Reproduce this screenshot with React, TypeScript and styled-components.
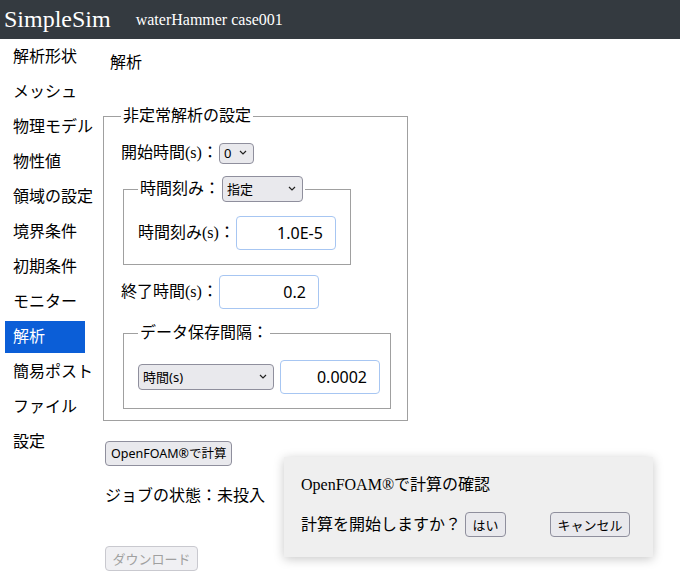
import React from 'react';
import styled, { createGlobalStyle } from 'styled-components';

const GlobalStyle = createGlobalStyle`
  body {
    margin: 0;
    background: #fff;
    font-family: "Liberation Serif", "Noto Sans CJK JP", serif;
    font-size: 16px;
    line-height: 24px;
    color: #000;
  }
`;

const uiFont = `"Noto Sans", "Noto Sans CJK JP", sans-serif`;

const Header = styled.header`
  height: 39px;
  background: #343a40;
  color: #fff;
  display: flex;
  align-items: center;
  padding-left: 4px;
`;

const Brand = styled.div`
  font-size: 24px;
  line-height: 30px;
  margin-top: -2px;
`;

const CaseName = styled.div`
  font-size: 16px;
  margin-left: 25px;
`;

const Body = styled.div`
  display: flex;
  position: relative;
  min-height: 545px;
`;

const Sidebar = styled.nav`
  width: 96px;
  flex-shrink: 0;
  padding-top: 2px;
  display: flex;
  flex-direction: column;
  align-items: flex-start;
  gap: 3px;
`;

const NavItem = styled.div<{ $active?: boolean }>`
  margin-left: 5px;
  min-width: 80px;
  height: 32px;
  line-height: 32px;
  padding-left: 8px;
  box-sizing: border-box;
  white-space: nowrap;
  background: ${(p) => (p.$active ? '#0b5ed7' : 'transparent')};
  color: ${(p) => (p.$active ? '#fff' : '#000')};
`;

const Main = styled.main`
  padding-left: 5px;
  padding-top: 12px;
`;

const Title = styled.div`
  padding-left: 9px;
`;

const Fieldset = styled.fieldset<{ $w: number }>`
  width: ${(p) => p.$w}px;
  box-sizing: border-box;
  margin: 0 2px;
  padding: 0 0 11px 17px;
  border: 1px solid #a0a0a0;
  display: flex;
  flex-direction: column;
  align-items: flex-start;
`;

const Outer = styled(Fieldset)`
  margin-top: 29px;
`;

const Inner = styled(Fieldset)<{ $mt: number }>`
  padding: 0 0 14px 14px;
  margin-top: ${(p) => p.$mt}px;
`;

const Legend = styled.legend`
  padding: 0 2px;
  display: flex;
  align-items: center;
  gap: 2px;
`;

const Row = styled.div<{ $mt: number }>`
  display: flex;
  align-items: center;
  gap: 1px;
  margin-top: ${(p) => p.$mt}px;
`;

const SelectWrap = styled.span`
  position: relative;
  display: inline-flex;
`;

const Select = styled.select<{ $w: number; $h: number }>`
  appearance: none;
  width: ${(p) => p.$w}px;
  height: ${(p) => p.$h}px;
  box-sizing: border-box;
  background: #e9e9ed;
  border: 1px solid #8f8f9d;
  border-radius: 4px;
  font-family: ${uiFont};
  font-size: 13px;
  color: #000;
  padding: 0 0 0 4px;
  margin: 0;
`;

const Chevron = styled.svg`
  position: absolute;
  right: 7px;
  top: 50%;
  margin-top: -3px;
  pointer-events: none;
`;

const NumInput = styled.input`
  width: 100px;
  height: 34px;
  box-sizing: border-box;
  border: 1px solid #a7c6f2;
  border-radius: 4px;
  text-align: right;
  padding: 0 12px 0 4px;
  font-family: ${uiFont};
  font-size: 16px;
  color: #000;
  margin: 0;
`;

const Gap = styled.span<{ $w: number }>`
  display: inline-block;
  width: ${(p) => p.$w}px;
`;

const Button = styled.button<{ $mt?: number; $ml?: number; $compact?: boolean }>`
  font-family: ${uiFont};
  font-size: ${(p) => (p.$compact ? '12.5px' : '13px')};
  line-height: 18px;
  height: 25px;
  padding: ${(p) => (p.$compact ? '0 5px' : '0 6.5px')};
  margin-top: ${(p) => p.$mt ?? 0}px;
  margin-left: ${(p) => p.$ml ?? 0}px;
  background: #e9e9ed;
  border: 1px solid #8f8f9d;
  border-radius: 4px;
  color: #000;

  &:disabled {
    color: #a0a0a0;
    border-color: #c9c9cf;
    background: #f0f0f3;
  }
`;

const Status = styled.div`
  margin-top: 18px;
`;

const Actions = styled.div`
  padding-left: 4px;
  padding-top: 20px;
  display: flex;
  flex-direction: column;
  align-items: flex-start;
`;

const Dialog = styled.div`
  position: absolute;
  left: 284px;
  top: 418px;
  width: 369px;
  height: 100px;
  box-sizing: border-box;
  background: #efefef;
  box-shadow: 0 2px 10px rgba(0, 0, 0, 0.22);
  padding: 16px 0 0 17px;
`;

const DialogRow = styled.div`
  display: flex;
  align-items: center;
  margin-top: 15px;
`;

function Dropdown({ value, w, h }: { value: string; w: number; h: number }) {
  return (
    <SelectWrap>
      <Select $w={w} $h={h} defaultValue={value}>
        <option>{value}</option>
      </Select>
      <Chevron width="8" height="5" viewBox="0 0 8 5">
        <path d="M1 1 L4 4 L7 1" fill="none" stroke="#222" strokeWidth="1.2" />
      </Chevron>
    </SelectWrap>
  );
}

const navItems = ['解析形状', 'メッシュ', '物理モデル', '物性値', '領域の設定', '境界条件', '初期条件', 'モニター', '解析', '簡易ポスト', 'ファイル', '設定'];

export default function App() {
  return (
    <>
      <GlobalStyle />
      <Header>
        <Brand>SimpleSim</Brand>
        <CaseName>waterHammer case001</CaseName>
      </Header>
      <Body>
        <Sidebar>
          {navItems.map((n) => (
            <NavItem key={n} $active={n === '解析'}>{n}</NavItem>
          ))}
        </Sidebar>
        <Main>
          <Title>解析</Title>
          <Outer $w={305}>
            <Legend>非定常解析の設定</Legend>
            <Row $mt={13}>
              開始時間(s)：<Dropdown value="0" w={35} h={21} />
            </Row>
            <Inner $w={228} $mt={11}>
              <Legend>
                時間刻み：<Dropdown value="指定" w={81} h={26} />
              </Legend>
              <Row $mt={14}>
                時間刻み(s)：<NumInput defaultValue="1.0E-5" />
              </Row>
            </Inner>
            <Row $mt={10}>
              終了時間(s)：<NumInput defaultValue="0.2" />
            </Row>
            <Inner $w={268} $mt={12}>
              <Legend>データ保存間隔：</Legend>
              <Row $mt={15}>
                <Dropdown value="時間(s)" w={136} h={26} />
                <Gap $w={4} />
                <NumInput defaultValue="0.0002" />
              </Row>
            </Inner>
          </Outer>
          <Actions>
            <Button $compact>OpenFOAM®で計算</Button>
            <Status>ジョブの状態：未投入</Status>
            <Button $mt={38} disabled>ダウンロード</Button>
          </Actions>
        </Main>
        <Dialog>
          <div>OpenFOAM®で計算の確認</div>
          <DialogRow>
            計算を開始しますか？
            <Button $ml={4}>はい</Button>
            <Button $ml={44}>キャンセル</Button>
          </DialogRow>
        </Dialog>
      </Body>
    </>
  );
}
